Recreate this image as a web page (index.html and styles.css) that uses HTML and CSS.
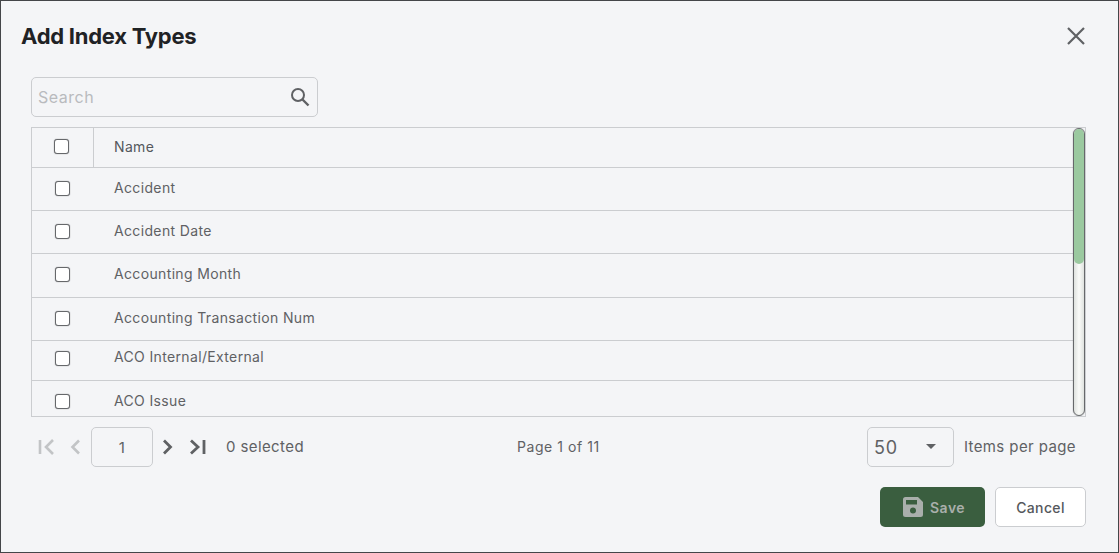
FILE: index.html
```html
<!DOCTYPE html>
<html lang="en">
<head>
  <meta charset="UTF-8">
  <title>Add Index Types</title>
  <link rel="stylesheet" href="styles.css">
</head>
<body>
  <div class="dialog">
    <div class="dialog-header">
      <h1 class="dialog-title">Add Index Types</h1>
      <button class="close-btn" aria-label="Close">
        <svg width="20" height="20" viewBox="0 0 20 20"><path d="M2 2 L18 18 M18 2 L2 18" stroke="#5f6164" stroke-width="2.2" fill="none"/></svg>
      </button>
    </div>

    <div class="search">
      <span class="search-placeholder">Search</span>
      <svg class="search-icon" width="20" height="20" viewBox="0 0 20 20"><circle cx="8" cy="8" r="6" stroke="#5f6164" stroke-width="2" fill="none"/><path d="M12.5 12.5 L18.5 18.5" stroke="#5f6164" stroke-width="2.4" fill="none"/></svg>
    </div>

    <div class="table">
      <div class="row row-head h40">
        <div class="cell-check head-check"><span class="checkbox"></span></div>
        <div class="cell-name">Name</div>
      </div>
      <div class="row h43"><div class="cell-check"><span class="checkbox"></span></div><div class="cell-name">Accident</div></div>
      <div class="row h43"><div class="cell-check"><span class="checkbox"></span></div><div class="cell-name">Accident Date</div></div>
      <div class="row h44"><div class="cell-check"><span class="checkbox"></span></div><div class="cell-name">Accounting Month</div></div>
      <div class="row h43"><div class="cell-check"><span class="checkbox"></span></div><div class="cell-name">Accounting Transaction Num</div></div>
      <div class="row h40 row-tight"><div class="cell-check"><span class="checkbox"></span></div><div class="cell-name">ACO Internal/External</div></div>
      <div class="row h36 row-last"><div class="cell-check"><span class="checkbox"></span></div><div class="cell-name">ACO Issue</div></div>
      <div class="scrollbar"><div class="scroll-thumb"></div></div>
    </div>

    <div class="pager">
      <div class="pager-left">
        <svg class="pg-first" width="20" height="20" viewBox="0 0 20 20"><path d="M3 3 V17 M16 3 L9 10 L16 17" stroke="#c2c4c6" stroke-width="2.6" fill="none"/></svg>
        <svg class="pg-prev" width="12" height="20" viewBox="0 0 12 20"><path d="M10 3.5 L3.5 10 L10 16.5" stroke="#c2c4c6" stroke-width="2.6" fill="none"/></svg>
        <div class="page-input">1</div>
        <svg class="pg-next" width="12" height="20" viewBox="0 0 12 20"><path d="M3 3.5 L9.5 10 L3 16.5" stroke="#5f6164" stroke-width="2.8" fill="none"/></svg>
        <svg class="pg-last" width="20" height="20" viewBox="0 0 20 20"><path d="M3 3.5 L10 10 L3 16.5 M16 3 V17" stroke="#5f6164" stroke-width="2.8" fill="none"/></svg>
        <span class="selected-count">0 selected</span>
      </div>
      <div class="page-label">Page 1 of 11</div>
      <div class="pager-right">
        <div class="page-size"><span>50</span><i class="caret"></i></div>
        <span class="per-page">Items per page</span>
      </div>
    </div>

    <div class="actions">
      <button class="button button-save">
        <svg width="20" height="20" viewBox="0 0 20 20"><path fill-rule="evenodd" fill="#a9afab" d="M2.5 0 H15 L20 5 V17.5 A2.5 2.5 0 0 1 17.5 20 H2.5 A2.5 2.5 0 0 1 0 17.5 V2.5 A2.5 2.5 0 0 1 2.5 0 Z M3 3 V7.5 H14 V3 Z M10 10.5 A3 3 0 1 0 10 16.5 A3 3 0 1 0 10 10.5 Z"/></svg>
        Save
      </button>
      <button class="button button-cancel">Cancel</button>
    </div>
  </div>
</body>
</html>
```

FILE: styles.css
```css
* {
  box-sizing: border-box;
}
html, body {
  margin: 0;
  height: 100%;
}
body {
  font-family: Inter, "Noto Sans", sans-serif;
  color: #5f6164;
  background: #f4f5f7;
}
.dialog {
  width: 1119px;
  height: 553px;
  border: 1px solid #444649;
  background: #f4f5f7;
  padding: 0 32px 0 30px;
}
.dialog-header {
  display: flex;
  justify-content: space-between;
  align-items: center;
  height: 70px;
  margin-left: -10px;
  margin-right: 0;
}
.dialog-title {
  margin: 0;
  font-size: 22px;
  font-weight: 700;
  letter-spacing: -0.25px;
  color: #1f2225;
}
.close-btn {
  background: none;
  border: 0;
  padding: 0;
  width: 20px;
  height: 20px;
  margin-bottom: 1px;
}
.close-btn svg {
  display: block;
}
.search {
  width: 287px;
  height: 40px;
  margin-top: 6px;
  border: 1px solid #cbcdd0;
  border-radius: 5px;
  display: flex;
  align-items: center;
  justify-content: space-between;
  padding: 0 7px 0 6px;
}
.search-placeholder {
  font-size: 16px;
  letter-spacing: 0.5px;
  color: #b9bbbe;
}
.table {
  position: relative;
  margin-top: 10px;
  height: 290px;
  border: 1px solid #cbcdd0;
  overflow: hidden;
}
.row {
  display: flex;
  align-items: center;
  border-bottom: 1px solid #cbcdd0;
  font-size: 14px;
  letter-spacing: 0.35px;
  padding-bottom: 2px;
}
.row-tight {
  padding-bottom: 4px;
}
.row-tight .cell-name {
  padding-bottom: 4px;
}
.row-last {
  border-bottom: 0;
  padding-top: 4px;
  padding-bottom: 0;
}
.h36 { height: 36px; }
.h40 { height: 40px; }
.h43 { height: 43px; }
.h44 { height: 44px; }
.cell-check {
  width: 62px;
  padding-left: 23px;
  display: flex;
  align-items: center;
}
.row-head {
  padding-bottom: 0;
}
.head-check {
  height: 100%;
  border-right: 1px solid #cbcdd0;
  padding-left: 22px;
  padding-bottom: 2px;
}
.cell-name {
  padding-left: 20px;
  padding-bottom: 2px;
}
.row-head .cell-name {
  color: #55585c;
}
.checkbox {
  display: block;
  width: 15px;
  height: 15px;
  border: 1px solid #66686b;
  box-shadow: 0 0 1px #66686b;
  border-radius: 3px;
  background: #fff;
}
.scrollbar {
  position: absolute;
  top: 0;
  right: 0;
  width: 12px;
  height: 288px;
  border: 1px solid #66686b;
  box-shadow: 0 0 1px #66686b;
  border-radius: 6px;
  background: linear-gradient(to right, #dfe2df, #fafbf9 50%, #dfe2df);
  overflow: hidden;
}
.scroll-thumb {
  height: 135px;
  background: #9bc9a0;
  border-radius: 0 0 5px 5px;
}
.pager {
  display: flex;
  align-items: center;
  justify-content: space-between;
  height: 40px;
  margin-top: 10px;
  font-size: 15px;
  letter-spacing: 0.4px;
}
.pager-left, .pager-right {
  display: flex;
  align-items: center;
}
.pager-left {
  width: 332px;
  padding-left: 6px;
}
.pg-prev {
  margin-left: 12px;
}
.page-input {
  width: 62px;
  height: 40px;
  margin-left: 10px;
  border: 1px solid #cbcdd0;
  border-radius: 5px;
  display: flex;
  align-items: center;
  justify-content: center;
  font-size: 15px;
}
.pg-next {
  margin-left: 8px;
}
.pg-last {
  margin-left: 15px;
}
.selected-count {
  margin-left: 18px;
  padding-bottom: 2px;
}
.page-label {
  flex: 1;
  padding-left: 154px;
  padding-bottom: 2px;
  font-size: 14px;
  letter-spacing: 0.55px;
}
.page-size {
  width: 87px;
  height: 40px;
  border: 1px solid #cbcdd0;
  border-radius: 5px;
  display: flex;
  align-items: center;
  justify-content: space-between;
  padding: 0 17px 0 6px;
  font-size: 18px;
  letter-spacing: 1px;
}
.caret {
  width: 0;
  height: 0;
  border-left: 5px solid transparent;
  border-right: 5px solid transparent;
  border-top: 5px solid #5f6164;
  margin-top: -2px;
}
.per-page {
  margin-left: 10px;
  margin-right: 10px;
  padding-bottom: 2px;
}
.actions {
  display: flex;
  justify-content: flex-end;
  gap: 10px;
  margin-top: 20px;
}
.button {
  height: 40px;
  border-radius: 5px;
  font-family: inherit;
  font-size: 14px;
  display: flex;
  align-items: center;
  justify-content: center;
}
.button-save {
  width: 105px;
  background: #3a5e3f;
  border: 0;
  color: #a9afab;
  font-weight: 600;
  letter-spacing: 0.5px;
  gap: 7px;
  justify-content: flex-start;
  padding-left: 23px;
}
.button-cancel {
  width: 91px;
  background: #fff;
  border: 1px solid #cbcdd0;
  color: #55585c;
  font-weight: 500;
  letter-spacing: 0.35px;
}
```
